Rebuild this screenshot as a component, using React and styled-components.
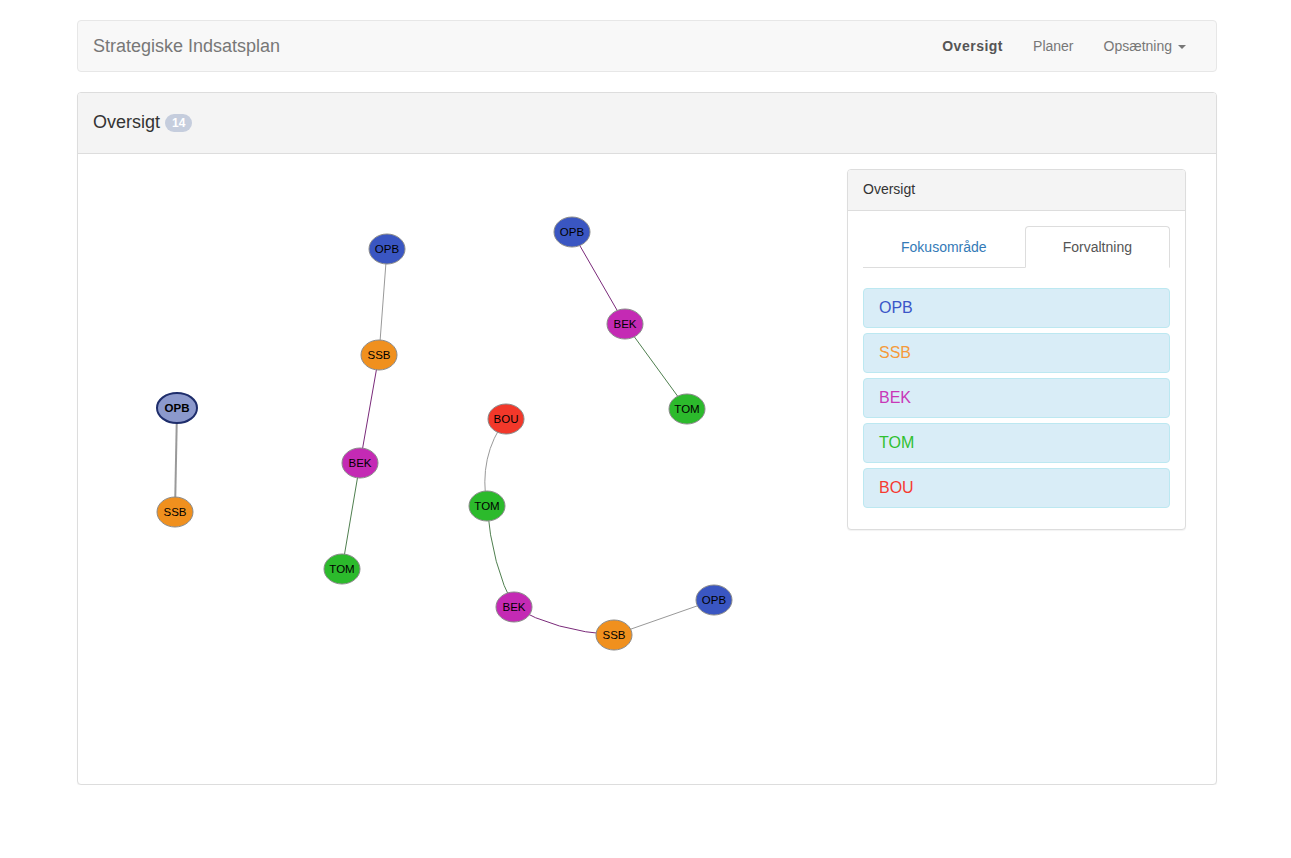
import React from "react";
import styled, { createGlobalStyle } from "styled-components";

const Global = createGlobalStyle`
  html, body { margin: 0; padding: 0; background: #fff; }
  body {
    font-family: "Liberation Sans", Arial, Helvetica, sans-serif;
    font-size: 14px;
    line-height: 1.42857;
    color: #333;
  }
  * { box-sizing: border-box; }
`;

const Page = styled.div`
  width: 1140px;
  margin: 20px 0 0 77px;
`;

const Navbar = styled.nav`
  display: flex;
  align-items: center;
  justify-content: space-between;
  min-height: 52px;
  background: #f8f8f8;
  border: 1px solid #e7e7e7;
  border-radius: 4px;
  margin-bottom: 20px;
`;

const Brand = styled.div`
  padding: 15px;
  font-size: 18px;
  line-height: 20px;
  color: #777;
`;

const NavList = styled.ul`
  display: flex;
  list-style: none;
  margin: 0 15px 0 0;
  padding: 0;
`;

const NavLink = styled.li`
  padding: 15px;
  line-height: 20px;
  color: ${({ $active }) => ($active ? "#555" : "#777")};
  font-weight: ${({ $active }) => ($active ? 700 : 400)};
  letter-spacing: ${({ $active }) => ($active ? "0.5px" : "0")};
`;

const Caret = styled.span`
  display: inline-block;
  width: 0;
  height: 0;
  margin-left: 6px;
  vertical-align: middle;
  border-top: 4px solid #777;
  border-left: 4px solid transparent;
  border-right: 4px solid transparent;
`;

const Panel = styled.div`
  border: 1px solid #ddd;
  border-radius: 4px;
  background: #fff;
  box-shadow: 0 1px 1px rgba(0, 0, 0, 0.05);
`;

const PanelHeading = styled.div`
  display: flex;
  align-items: center;
  height: ${({ $tall }) => ($tall ? "61px" : "41px")};
  padding: 0 15px;
  background: #f4f4f4;
  border-bottom: 1px solid #ddd;
  border-radius: 3px 3px 0 0;
  font-size: ${({ $tall }) => ($tall ? "18px" : "14px")};
  color: #333;
`;

const Badge = styled.span`
  display: inline-block;
  margin-left: 5px;
  padding: 3px 7px;
  font-size: 12px;
  font-weight: 700;
  line-height: 1;
  color: #fff;
  background: #c5cddd;
  border-radius: 10px;
`;

const MainBody = styled.div`
  display: flex;
  padding: 15px 30px 15px 15px;
`;

const GraphArea = styled.div`
  flex: 1;
  height: 600px;
`;

const SidePanel = styled(Panel)`
  width: 339px;
  align-self: flex-start;
`;

const SideBody = styled.div`
  padding: 15px;
`;

const Tabs = styled.ul`
  display: flex;
  list-style: none;
  margin: 0 0 20px;
  padding: 0;
  border-bottom: 1px solid #ddd;
`;

const Tab = styled.li`
  flex: 1 1 auto;
  text-align: center;
  padding: 10px 15px;
  line-height: 20px;
  margin-bottom: -1px;
  border: 1px solid ${({ $active }) => ($active ? "#ddd" : "transparent")};
  border-bottom-color: ${({ $active }) => ($active ? "#fff" : "transparent")};
  border-radius: 4px 4px 0 0;
  background: ${({ $active }) => ($active ? "#fff" : "transparent")};
  color: ${({ $active }) => ($active ? "#555" : "#337ab7")};
`;

const ItemList = styled.div`
  display: flex;
  flex-direction: column;
  gap: 5px;
  margin-bottom: 6px;
`;

const Item = styled.div`
  height: 40px;
  padding: 9px 15px;
  font-size: 16px;
  line-height: 20px;
  background: #d9edf7;
  border: 1px solid #bce8f1;
  border-radius: 4px;
  color: ${({ $color }) => $color};
`;

const COLORS = {
  OPB: "#3a56c2",
  SSB: "#f0901e",
  BEK: "#c42ab4",
  TOM: "#2cba2c",
  BOU: "#f2382a",
};

const TEXT_COLORS = {
  OPB: "#3a56c8",
  SSB: "#f59a3a",
  BEK: "#c838b8",
  TOM: "#30c030",
  BOU: "#f63a30",
};

const EDGE = { grey: "#999", purple: "#7a2a7a", green: "#4f7f4f" };

// page coordinates, offset by the svg origin below
const OX = 93;
const OY = 168;

const nodes = [
  { id: "a1", label: "OPB", x: 177, y: 407, focus: true },
  { id: "a2", label: "SSB", x: 175, y: 511 },
  { id: "b1", label: "OPB", x: 387, y: 248 },
  { id: "b2", label: "SSB", x: 379, y: 354 },
  { id: "b3", label: "BEK", x: 360, y: 462 },
  { id: "b4", label: "TOM", x: 342, y: 568 },
  { id: "c1", label: "OPB", x: 572, y: 231 },
  { id: "c2", label: "BEK", x: 625, y: 323 },
  { id: "c3", label: "TOM", x: 687, y: 408 },
  { id: "d1", label: "BOU", x: 506, y: 418 },
  { id: "d2", label: "TOM", x: 487, y: 505 },
  { id: "d3", label: "BEK", x: 514, y: 606 },
  { id: "d4", label: "SSB", x: 614, y: 634 },
  { id: "d5", label: "OPB", x: 714, y: 599 },
];

const edges = [
  { from: "a1", to: "a2", color: EDGE.grey, width: 2 },
  { from: "b1", to: "b2", color: EDGE.grey },
  { from: "b2", to: "b3", color: EDGE.purple },
  { from: "b3", to: "b4", color: EDGE.green },
  { from: "c1", to: "c2", color: EDGE.purple },
  { from: "c2", to: "c3", color: EDGE.green },
  { from: "d1", to: "d2", color: EDGE.grey, c: [478, 455] },
  { from: "d2", to: "d3", color: EDGE.green, c: [492, 565] },
  { from: "d3", to: "d4", color: EDGE.purple, c: [555, 630] },
  { from: "d4", to: "d5", color: EDGE.grey },
];

const byId = Object.fromEntries(nodes.map((n) => [n.id, n]));

function Graph() {
  return (
    <svg width="100%" height="600">
      <g transform={`translate(${-OX},${-OY})`}>
        {edges.map((e) => {
          const a = byId[e.from];
          const b = byId[e.to];
          const d = e.c
            ? `M${a.x},${a.y} Q${e.c[0]},${e.c[1]} ${b.x},${b.y}`
            : `M${a.x},${a.y} L${b.x},${b.y}`;
          return (
            <path
              key={e.from + e.to}
              d={d}
              fill="none"
              stroke={e.color}
              strokeWidth={e.width || 1}
            />
          );
        })}
        {nodes.map((n) => (
          <g key={n.id}>
            <ellipse
              cx={n.x}
              cy={n.y}
              rx={n.focus ? 20 : 18}
              ry={15}
              fill={n.focus ? "#8c99cc" : COLORS[n.label]}
              stroke={n.focus ? "#1e2d6b" : "#8a8a8a"}
              strokeWidth={n.focus ? 2 : 1}
            />
            <text
              x={n.x}
              y={n.y + 4}
              textAnchor="middle"
              fontSize="11.5"
              fontWeight={n.focus ? 700 : 400}
              fontFamily="'Liberation Sans', Arial, sans-serif"
              fill="#000"
            >
              {n.label}
            </text>
          </g>
        ))}
      </g>
    </svg>
  );
}

const groups = ["OPB", "SSB", "BEK", "TOM", "BOU"];

export default function App() {
  return (
    <>
      <Global />
      <Page>
        <Navbar>
          <Brand>Strategiske Indsatsplan</Brand>
          <NavList>
            <NavLink $active>Oversigt</NavLink>
            <NavLink>Planer</NavLink>
            <NavLink>
              Opsætning
              <Caret />
            </NavLink>
          </NavList>
        </Navbar>
        <Panel>
          <PanelHeading $tall>
            Oversigt <Badge>14</Badge>
          </PanelHeading>
          <MainBody>
            <GraphArea>
              <Graph />
            </GraphArea>
            <SidePanel>
              <PanelHeading>Oversigt</PanelHeading>
              <SideBody>
                <Tabs>
                  <Tab>Fokusområde</Tab>
                  <Tab $active>Forvaltning</Tab>
                </Tabs>
                <ItemList>
                  {groups.map((g) => (
                    <Item key={g} $color={TEXT_COLORS[g]}>
                      {g}
                    </Item>
                  ))}
                </ItemList>
              </SideBody>
            </SidePanel>
          </MainBody>
        </Panel>
      </Page>
    </>
  );
}
